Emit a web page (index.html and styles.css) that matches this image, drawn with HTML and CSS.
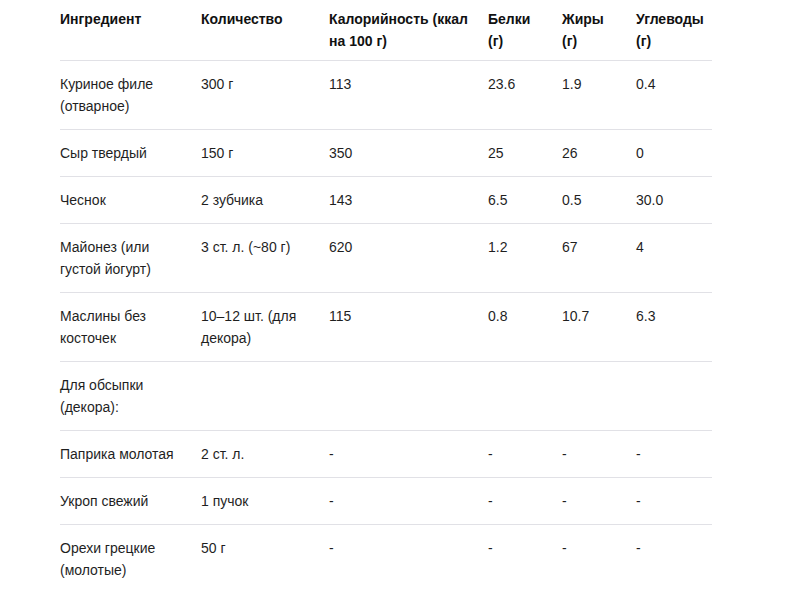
FILE: index.html
```html
<!DOCTYPE html>
<html lang="ru">
<head>
<meta charset="utf-8">
<title>Ингредиенты</title>
<link rel="stylesheet" href="styles.css">
</head>
<body>
<div class="wrap">
<table class="nutri">
<colgroup>
<col class="c1"><col class="c2"><col class="c3"><col class="c4"><col class="c5"><col class="c6">
</colgroup>
<thead>
<tr><th>Ингредиент</th><th>Количество</th><th>Калорийность (ккал на 100 г)</th><th>Белки (г)</th><th>Жиры (г)</th><th>Углеводы (г)</th></tr>
</thead>
<tbody>
<tr><td>Куриное филе (отварное)</td><td>300 г</td><td>113</td><td>23.6</td><td>1.9</td><td>0.4</td></tr>
<tr><td>Сыр твердый</td><td>150 г</td><td>350</td><td>25</td><td>26</td><td>0</td></tr>
<tr><td>Чеснок</td><td>2 зубчика</td><td>143</td><td>6.5</td><td>0.5</td><td>30.0</td></tr>
<tr><td>Майонез (или густой йогурт)</td><td>3 ст. л. (~80 г)</td><td>620</td><td>1.2</td><td>67</td><td>4</td></tr>
<tr><td>Маслины без косточек</td><td>10–12 шт. (для декора)</td><td>115</td><td>0.8</td><td>10.7</td><td>6.3</td></tr>
<tr><td>Для обсыпки (декора):</td><td></td><td></td><td></td><td></td><td></td></tr>
<tr><td>Паприка молотая</td><td>2 ст. л.</td><td>-</td><td>-</td><td>-</td><td>-</td></tr>
<tr><td>Укроп свежий</td><td>1 пучок</td><td>-</td><td>-</td><td>-</td><td>-</td></tr>
<tr class="last"><td>Орехи грецкие (молотые)</td><td>50 г</td><td>-</td><td>-</td><td>-</td><td>-</td></tr>
</tbody>
</table>
</div>
</body>
</html>
```
FILE: styles.css
```css
html, body {
  margin: 0;
  padding: 0;
  background: #ffffff;
}
.wrap {
  padding: 0 0 0 60px;
}
.nutri {
  border-collapse: collapse;
  table-layout: fixed;
  width: 652px;
  font-family: "Liberation Sans", Arial, sans-serif;
  font-size: 14px;
  line-height: 22px;
  color: #1f1f1f;
}
.c1 { width: 141px; }
.c2 { width: 128px; }
.c3 { width: 159px; }
.c4 { width: 74px; }
.c5 { width: 74px; }
.c6 { width: 76px; }
.nutri th {
  text-align: left;
  vertical-align: top;
  font-weight: bold;
  color: #111111;
  padding: 8px 16px 8px 0;
  border-bottom: 1px solid #e1e1e6;
}
.nutri td {
  text-align: left;
  vertical-align: top;
  padding: 12px 16px 12px 0;
  border-bottom: 1px solid #e1e1e6;
}
.nutri tr.last td {
  border-bottom: none;
}
```
